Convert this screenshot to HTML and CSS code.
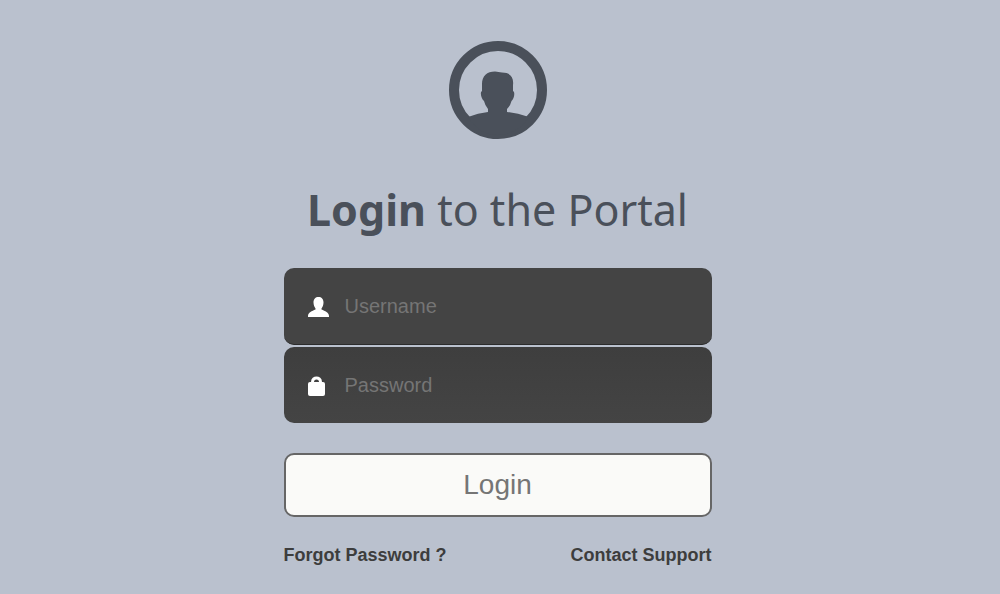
FILE: index.html
```html
<!DOCTYPE html>
<html lang="en">

<head>
    <meta charset="UTF-8">
    <meta name="viewport" content="width=device-width, initial-scale=1.0">
    <title>Login to the Portal</title>
    <link rel="stylesheet" href="styles.css">
</head>

<body>
    <main class="login">
        <svg class="avatar" viewBox="0 0 98 98" aria-hidden="true">
            <circle cx="49" cy="49" r="44" fill="none" stroke="currentColor" stroke-width="10" />
            <path fill="currentColor" d="M39 71V68Q36 64.500 35 60C32.500 58 30.500 51.500 33 50V43C33 35 38 30.500 46 30.500C49 30.500 50 31.500 53 31.500C61 31.500 65 36 64 44V50C66.500 51 65 58 62.500 60Q61.500 64.500 58 68V71Q68 72 80 76Q68 94 49 94Q30 94 19 76Q29 72 39 71Z" />
        </svg>

        <h1><strong>Login</strong> to the Portal</h1>

        <form action="#" method="post">
            <div class="field">
                <label for="username" aria-label="Username">
                    <svg viewBox="0 0 22 20" aria-hidden="true">
                        <path fill="currentColor" d="M10.500 0C7.500 0 5.500 2 5.500 5.500C5.500 8 6.500 10 7.500 11.500V12.500C4 14 0 15.500 0 19V20H21V19C21 15.500 17 14 13.500 12.500V11.500C14.500 10 15.500 8 15.500 5.500C15.500 2 13.500 0 10.500 0Z" />
                    </svg>
                </label>
                <input type="text" id="username" name="username" placeholder="Username">
            </div>
            <div class="field field-password">
                <label for="password" aria-label="Password">
                    <svg viewBox="0 0 22 20" aria-hidden="true">
                        <path fill="none" stroke="currentColor" stroke-width="3" d="M4.500 8V6C4.500 0.500 12.500 0.500 12.500 6V8" />
                        <rect fill="currentColor" y="6" width="17" height="14" rx="2" />
                    </svg>
                </label>
                <input type="password" id="password" name="password" placeholder="Password">
            </div>
            <button type="submit">Login</button>
        </form>

        <div class="links">
            <a href="#">Forgot Password ?</a>
            <a href="#">Contact Support</a>
        </div>
    </main>
</body>

</html>
```
FILE: styles.css
```css
* {
    box-sizing: border-box;
    margin: 0;
    padding: 0;
}

body {
    min-height: 100vh;
    padding: 41px 5px 24px 0;
    background-color: #bac1ce;
    font-family: "Liberation Sans", Arial, sans-serif;
}

.login {
    width: 100%;
    max-width: 428px;
    margin: 0 auto;
}

.avatar {
    display: block;
    width: 98px;
    height: 98px;
    margin: 0 auto 39px;
    color: #4a505a;
}

h1 {
    margin-bottom: 26px;
    color: #4a505a;
    font-family: "Noto Sans", sans-serif;
    font-size: 43px;
    font-weight: 400;
    line-height: 64px;
    text-align: center;
    white-space: nowrap;
}

.field {
    display: flex;
    align-items: center;
    height: 77px;
    margin-bottom: 2px;
    padding: 0 24px;
    background-color: #444;
    border-bottom: 1px solid #2b2b2b;
    border-radius: 10px;
}

.field-password {
    height: 76px;
    margin-bottom: 30px;
    background: linear-gradient(#3e3e3e, #444);
    border-bottom: 0;
}

.field label {
    display: flex;
    margin-right: 15px;
    padding-top: 2px;
    color: #fff;
}

.field svg {
    width: 22px;
    height: 20px;
}

.field input {
    flex: 1;
    min-width: 0;
    height: 40px;
    background: transparent;
    border: 0;
    outline: 0;
    color: #ddd;
    font-family: inherit;
    font-size: 20px;
}

.field input::placeholder {
    color: #757575;
}

button {
    display: block;
    width: 100%;
    height: 64px;
    background-color: #fafaf8;
    border: 2px solid #666;
    border-radius: 10px;
    color: #757575;
    font-family: inherit;
    font-size: 28px;
    cursor: pointer;
}

.links {
    display: flex;
    justify-content: space-between;
    margin-top: 28px;
}

.links a {
    color: #3d3d3d;
    font-size: 18px;
    font-weight: 700;
    line-height: 20px;
    text-decoration: none;
}
```
